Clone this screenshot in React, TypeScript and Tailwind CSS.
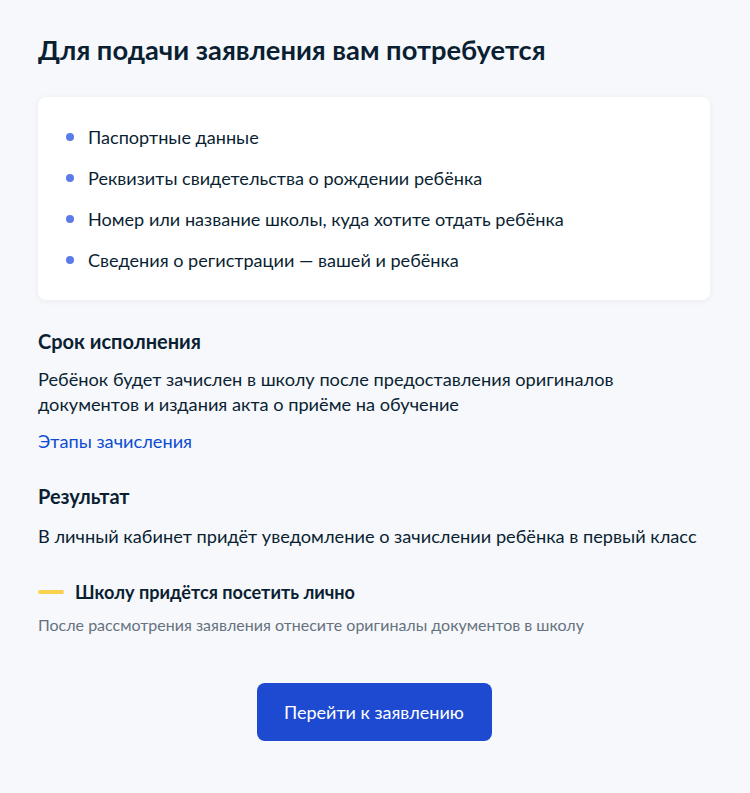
import React from "react";

const items = [
  "Паспортные данные",
  "Реквизиты свидетельства о рождении ребёнка",
  "Номер или название школы, куда хотите отдать ребёнка",
  "Сведения о регистрации — вашей и ребёнка",
];

export default function App() {
  return (
    <div className="min-h-[793px] bg-[#f6f8fb] px-[38px] pt-[33px] pb-[40px] text-[#0b1f33]" style={{ fontFamily: "Lato, 'Noto Sans', sans-serif" }}>
      <h1 className="text-[27.3px] font-bold leading-[34px]">Для подачи заявления вам потребуется</h1>
      <div className="mt-[30px] w-[672px] rounded-[8px] bg-white px-[28px] pt-[28px] pb-[28px] shadow-[0_1px_6px_rgba(0,0,0,0.06)]">
        <ul className="flex flex-col gap-[17px]">
          {items.map((t) => (
            <li key={t} className="flex items-center text-[18.1px] leading-[24px]">
              <span className="mr-[14px] h-[8px] w-[8px] rounded-full bg-[#5b7be8]" />
              {t}
            </li>
          ))}
        </ul>
      </div>
      <h2 className="mt-[27px] text-[20px] font-bold leading-[28px]">Срок исполнения</h2>
      <p className="mt-[12px] text-[18.2px] leading-[25px]">
        Ребёнок будет зачислен в школу после предоставления оригиналов
        <br />
        документов и издания акта о приёме на обучение
      </p>
      <a className="mt-[12px] block text-[18.2px] leading-[24px] text-[#0d4cd3]">Этапы зачисления</a>
      <h2 className="mt-[29px] text-[20px] font-bold leading-[28px]">Результат</h2>
      <p className="mt-[14px] text-[18.2px] leading-[25px]">
        В личный кабинет придёт уведомление о зачислении ребёнка в первый класс
      </p>
      <div className="mt-[31px] flex items-center">
        <span className="mr-[11px] h-[4px] w-[26px] rounded-full bg-[#f8d24d]" />
        <span className="text-[18.1px] font-bold leading-[24px]">Школу придётся посетить лично</span>
      </div>
      <p className="mt-[11px] text-[16px] leading-[20px] text-[#66727f]">
        После рассмотрения заявления отнесите оригиналы документов в школу
      </p>
      <div className="mt-[48px] flex w-[672px] justify-center">
        <button className="h-[58px] w-[235px] rounded-[8px] bg-[#1d4ad1] text-[18px] text-white">
          Перейти к заявлению
        </button>
      </div>
    </div>
  );
}
